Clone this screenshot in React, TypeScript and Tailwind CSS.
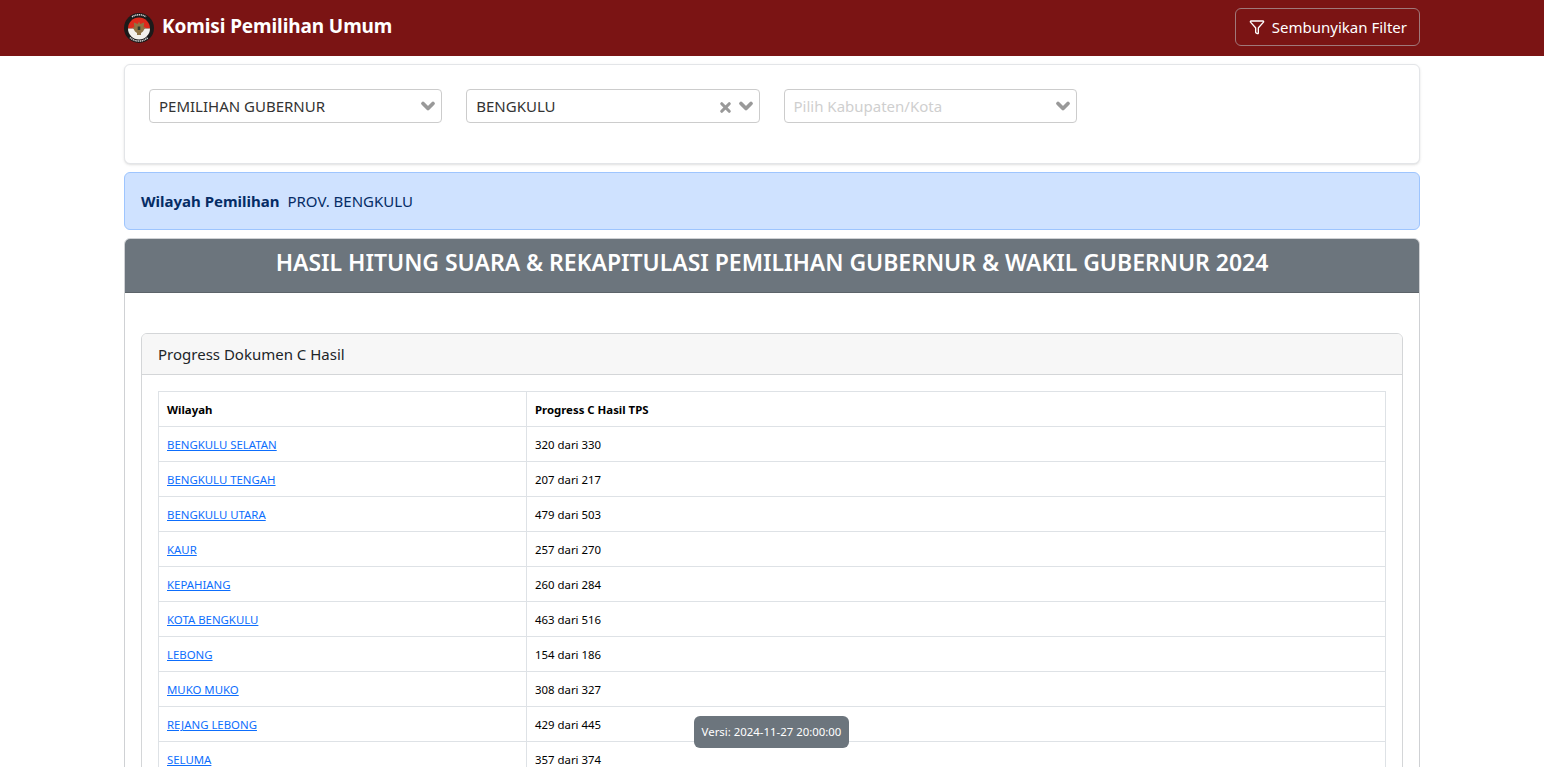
import React from 'react';
import { ChevronDown, Filter, X } from 'lucide-react';

const rows = [
  { name: 'BENGKULU SELATAN', progress: '320 dari 330' },
  { name: 'BENGKULU TENGAH', progress: '207 dari 217' },
  { name: 'BENGKULU UTARA', progress: '479 dari 503' },
  { name: 'KAUR', progress: '257 dari 270' },
  { name: 'KEPAHIANG', progress: '260 dari 284' },
  { name: 'KOTA BENGKULU', progress: '463 dari 516' },
  { name: 'LEBONG', progress: '154 dari 186' },
  { name: 'MUKO MUKO', progress: '308 dari 327' },
  { name: 'REJANG LEBONG', progress: '429 dari 445' },
  { name: 'SELUMA', progress: '357 dari 374' },
];

const Logo = () => (
  <svg viewBox="0 0 30 30" className="w-[30px] h-[30px] shrink-0">
    <circle cx="15" cy="15" r="15" fill="#1c1a1a" />
    <path d="M4 15.500a11 11 0 0 1 22 0z" fill="#dc2a1c" />
    <path d="M4 15.500a11 11 0 0 0 22 0z" fill="#f4f1ec" />
    <path d="M15 8.500l1.200 2.500 4-1.500-.6 5 2-.5-2.600 4.500-2 1.500v2h-4v-2l-2-1.500-2.600-4.500 2 .5-.6-5 4 1.500z" fill="#8f7444" />
    <rect x="13.700" y="13.500" width="2.600" height="3.500" fill="#2f3a2f" />
    <path d="M8 3.800a13 13 0 0 1 14 0" fill="none" stroke="#d8d8d8" strokeWidth="1.500" strokeDasharray="1.200 .6" />
    <path d="M6 24.500a13 13 0 0 0 18 0" fill="none" stroke="#d8d8d8" strokeWidth="1.500" strokeDasharray="1.200 .6" />
  </svg>
);

const Select = ({ value, placeholder, clearable }: { value?: string; placeholder?: string; clearable?: boolean }) => (
  <div className="h-[34px] flex items-center justify-between border border-[#cccccc] rounded-[4px] bg-white pl-[9px] pr-[3px]">
    <span className={value ? 'text-[15px] text-[#333333]' : 'text-[15px] text-[#cfcfcf]'}>{value ?? placeholder}</span>
    <span className="flex items-center gap-[3px]">
      {clearable && <X className="w-[15px] h-[15px] text-[#999999] mt-[3px]" strokeWidth={5} />}
      <ChevronDown className="w-[20px] h-[20px] text-[#999999]" strokeWidth={4.500} />
    </span>
  </div>
);

export default function App() {
  return (
    <div className="h-screen overflow-hidden bg-white font-['Noto_Sans',sans-serif] text-[#212529]">
      <nav className="h-14 bg-[#7b1414]">
        <div className="mx-[124px] h-full flex items-center justify-between">
          <div className="flex items-center gap-2">
            <Logo />
            <span className="text-[19px] tracking-[-0.1px] font-bold text-white mt-[-4px]">Komisi Pemilihan Umum</span>
          </div>
          <button className="h-[38px] pl-[13px] pr-[12px] flex items-center gap-[7px] border border-[#a0787a] rounded-[6px] text-[15px] text-white mt-[-2px]">
            <Filter className="w-4 h-4" />
            Sembunyikan Filter
          </button>
        </div>
      </nav>

      <main className="mx-[124px] pt-[8px] flex flex-col gap-2">
        <section className="h-[100px] bg-white border border-[#e3e5e8] rounded-[6px] shadow-sm px-6 pt-[24px]">
          <div className="grid grid-cols-4 gap-6 w-[1245px]">
            <Select value="PEMILIHAN GUBERNUR" />
            <Select value="BENGKULU" clearable />
            <Select placeholder="Pilih Kabupaten/Kota" />
          </div>
        </section>

        <section className="h-[58px] flex items-center gap-2 bg-[#cfe2ff] border border-[#9ec5fe] rounded-[6px] px-4 text-[15px] text-[#052c65]">
          <strong className="font-bold">Wilayah Pemilihan</strong>
          <span>PROV. BENGKULU</span>
        </section>

        <section className="border border-[#cfd1d4] rounded-[6px] h-[800px]">
          <h1 className="h-[54px] pb-[6px] flex items-center justify-center bg-[#6c757d] rounded-t-[5px] border-b border-[#5c6369] text-[23px] tracking-[-0.03px] font-semibold text-white">
            HASIL HITUNG SUARA &amp; REKAPITULASI PEMILIHAN GUBERNUR &amp; WAKIL GUBERNUR 2024
          </h1>
          <div className="px-4 pt-10">
            <div className="border border-[#d4d6d8] rounded-[6px]">
              <div className="h-[41px] flex items-center px-4 bg-[#f7f7f7] border-b border-[#d4d6d8] rounded-t-[5px] text-[15px]">
                Progress Dokumen C Hasil
              </div>
              <div className="p-4">
                <table className="w-full border-collapse text-[11.4px] text-black table-fixed">
                  <thead>
                    <tr className="h-[35px]">
                      <th className="w-[368px] border border-[#dee2e6] px-2 pt-[2px] text-left font-bold">Wilayah</th>
                      <th className="border border-[#dee2e6] px-2 pt-[2px] text-left font-bold">Progress C Hasil TPS</th>
                    </tr>
                  </thead>
                  <tbody>
                    {rows.map((row) => (
                      <tr key={row.name} className="h-[35px]">
                        <td className="border border-[#dee2e6] px-2 pt-[2px]">
                          <a href="#" className="text-[#0d6efd] underline">{row.name}</a>
                        </td>
                        <td className="border border-[#dee2e6] px-2 pt-[2px]">{row.progress}</td>
                      </tr>
                    ))}
                  </tbody>
                </table>
              </div>
            </div>
          </div>
        </section>
      </main>

      <div className="fixed left-[694px] top-[716px] h-8 w-[155px] flex items-center justify-center bg-[#6c757d] rounded-[6px] text-[11.4px] text-white">
        Versi: 2024-11-27 20:00:00
      </div>
    </div>
  );
}
